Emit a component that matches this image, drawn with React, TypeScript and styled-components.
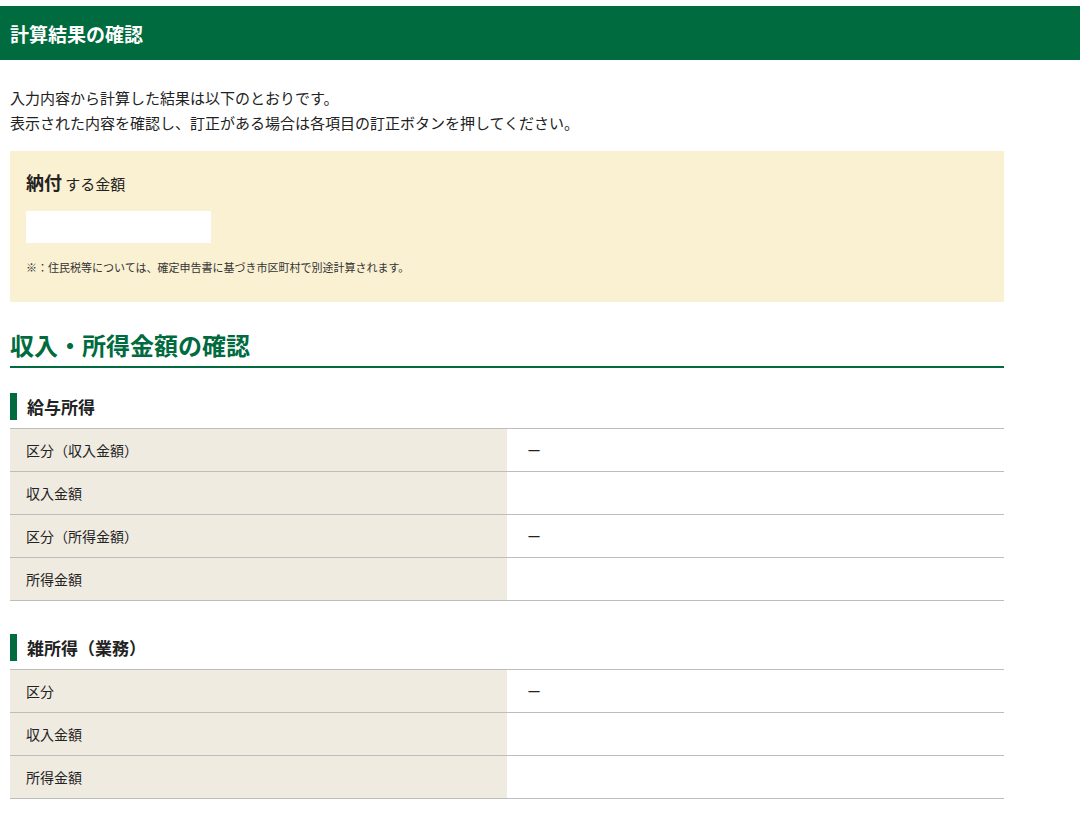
import styled, { createGlobalStyle } from "styled-components";

const GlobalStyle = createGlobalStyle`
  body {
    margin: 0;
    background: #fff;
    color: #222;
    font-family: "Noto Sans CJK JP", "Noto Sans", sans-serif;
  }
`;

const TopBar = styled.div`
  margin-top: 6px;
  height: 54px;
  background: #006b3e;
  color: #fff;
  display: flex;
  align-items: center;
  padding: 0 10px;
  font-size: 19px;
  font-weight: 700;
`;

const Content = styled.div`
  width: 994px;
  padding: 0 10px;
`;

const Intro = styled.p`
  margin: 25px 0 16px;
  font-size: 15px;
  line-height: 25px;
`;

const PayBox = styled.div`
  background: #faf0d2;
  padding: 18px 16px 16px;
  height: 151px;
  box-sizing: border-box;
`;

const PayTitle = styled.div`
  font-size: 15px;
  line-height: 26px;
  strong {
    font-size: 18px;
    font-weight: 700;
  }
`;

const AmountField = styled.div`
  width: 185px;
  height: 32px;
  background: #fff;
  margin-top: 14px;
`;

const Note = styled.div`
  margin-top: 16px;
  font-size: 11px;
  color: #333;
`;

const SectionTitle = styled.h2`
  margin: 26px 0 0;
  padding-bottom: 4px;
  border-bottom: 2px solid #006b3e;
  color: #006b3e;
  font-size: 24px;
  font-weight: 700;
  line-height: 34px;
`;

const SubTitle = styled.h3`
  margin: 25px 0 8px;
  border-left: 7px solid #006b3e;
  padding-left: 10px;
  font-size: 17px;
  font-weight: 700;
  line-height: 27px;
`;

const Table = styled.div`
  border-top: 1px solid #bdbdbd;
  margin-bottom: 33px;
`;

const Row = styled.div`
  display: grid;
  grid-template-columns: 497px 1fr;
  height: 42px;
  border-bottom: 1px solid #bdbdbd;
  font-size: 14px;
`;

const Label = styled.div`
  background: #f0ebe0;
  display: flex;
  align-items: center;
  padding-left: 16px;
`;

const Value = styled.div`
  display: flex;
  align-items: center;
  padding-left: 20px;
`;

const sections = [
  {
    title: "給与所得",
    rows: [
      ["区分（収入金額）", "ー"],
      ["収入金額", ""],
      ["区分（所得金額）", "ー"],
      ["所得金額", ""],
    ],
  },
  {
    title: "雑所得（業務）",
    rows: [
      ["区分", "ー"],
      ["収入金額", ""],
      ["所得金額", ""],
    ],
  },
];

export default function App() {
  return (
    <>
      <GlobalStyle />
      <TopBar>計算結果の確認</TopBar>
      <Content>
        <Intro>
          入力内容から計算した結果は以下のとおりです。
          <br />
          表示された内容を確認し、訂正がある場合は各項目の訂正ボタンを押してください。
        </Intro>
        <PayBox>
          <PayTitle>
            <strong>納付</strong> する金額
          </PayTitle>
          <AmountField />
          <Note>※：住民税等については、確定申告書に基づき市区町村で別途計算されます。</Note>
        </PayBox>
        <SectionTitle>収入・所得金額の確認</SectionTitle>
        {sections.map((s) => (
          <div key={s.title}>
            <SubTitle>{s.title}</SubTitle>
            <Table>
              {s.rows.map(([l, v]) => (
                <Row key={l}>
                  <Label>{l}</Label>
                  <Value>{v}</Value>
                </Row>
              ))}
            </Table>
          </div>
        ))}
      </Content>
    </>
  );
}
